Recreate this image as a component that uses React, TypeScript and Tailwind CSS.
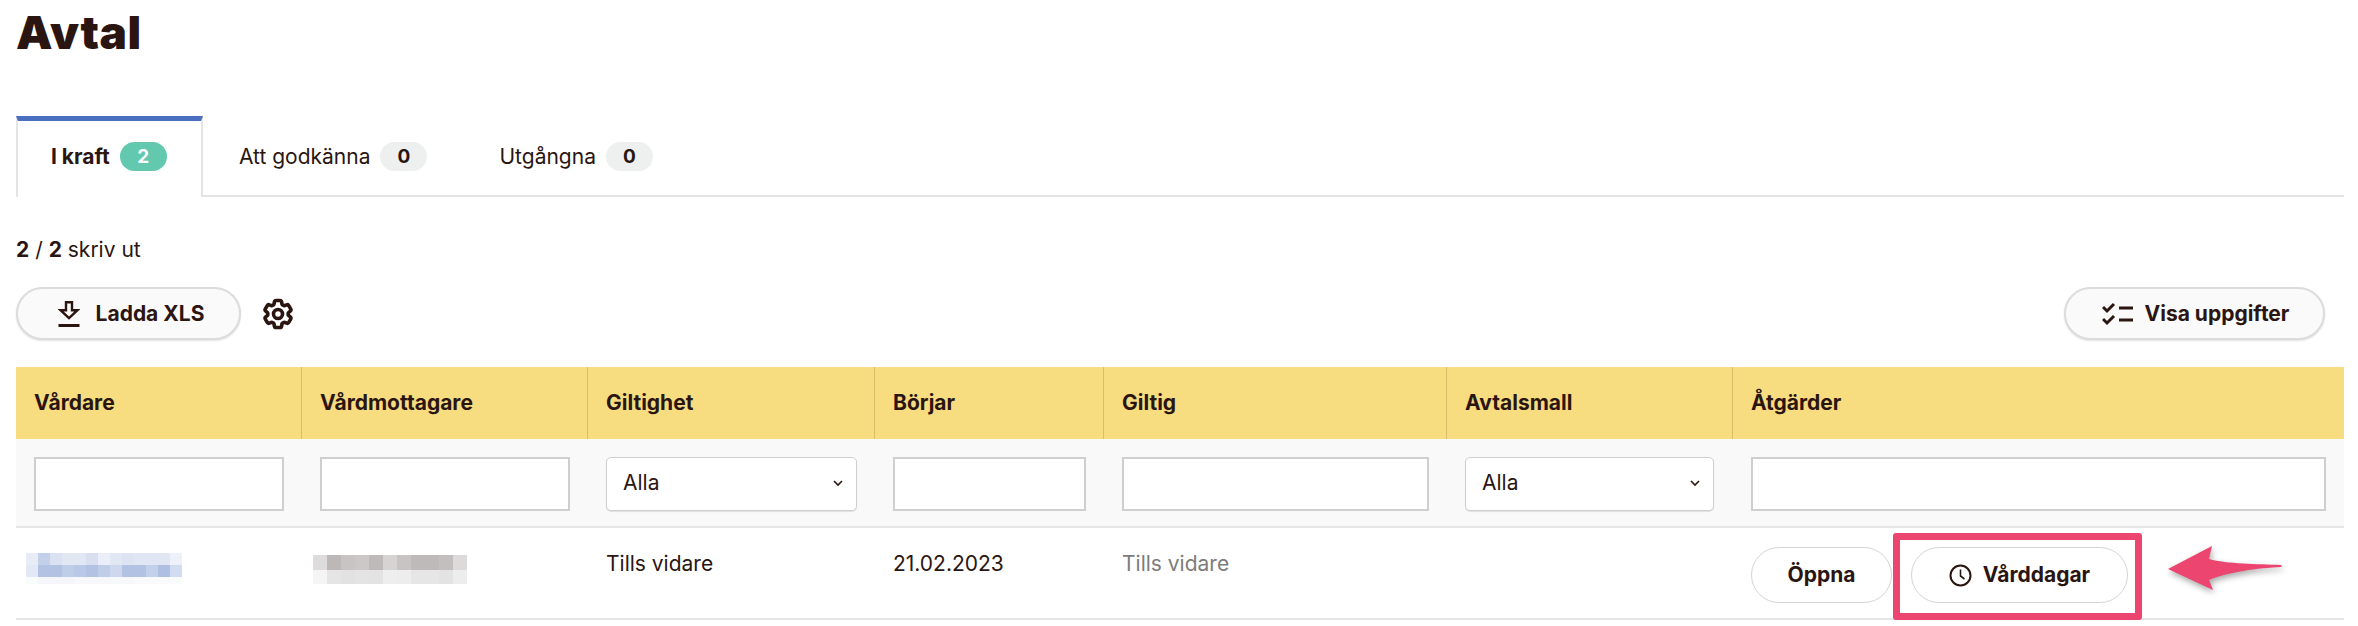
import React from 'react'
import { HiOutlineCog6Tooth } from 'react-icons/hi2'

const cols = 'grid grid-cols-[285px_286px_287px_229px_343px_286px_612px]'

const blueRows = [
  ['#e8ecf7', '#c3d0ea', '#d9e1f2', '#e2e7f4', '#e2e7f4', '#d7dff1', '#ebeef8', '#e2e7f4', '#dce3f2', '#e0e6f4', '#e0e6f4', '#e0e6f4', '#eef1f9'],
  ['#e2e8f5', '#b1c2e3', '#b1c2e3', '#bfcde8', '#b9c8e6', '#b1c2e3', '#bfcde8', '#cdd7ed', '#b1c2e3', '#b1c2e3', '#c3d0ea', '#aebfe1', '#d2dcf0'],
  ['#fafbfd', '#f5f6fb', '#f5f6fb', '#f5f6fb', '#f7f8fc', '#f7f8fc', '#f7f8fc', '#f7f8fc', '#f7f8fc', '#f9fafc', '#f9fafc', '#f9fafc', '#fafbfd'],
]

const greyRows = [
  ['#dddbdb', '#bdb8b8', '#c8c4c4', '#ccc8c8', '#bfbaba', '#d6d3d3', '#c8c4c4', '#bfbaba', '#bfbaba', '#c3bfbf', '#dcdada'],
  ['#f5f5f5', '#e6e5e5', '#e3e2e2', '#e5e4e4', '#e4e3e3', '#efeeee', '#eeeded', '#e7e6e6', '#e7e6e6', '#e4e3e3', '#eeeded'],
]

const Mosaic: React.FC<{ rows: string[][]; cell: string; heights: string[] }> = ({ rows, cell, heights }) => (
  <div className="flex flex-col blur-[0.5px]">
    {rows.map((row, i) => (
      <div key={i} className={`flex ${heights[i]}`}>
        {row.map((c, j) => (
          <div key={j} className={cell} style={{ backgroundColor: c }} />
        ))}
      </div>
    ))}
  </div>
)

const Pill: React.FC<{ children: React.ReactNode; className: string }> = ({ children, className }) => (
  <button className={`flex items-center justify-center rounded-full text-[21px] font-bold ${className}`}>
    {children}
  </button>
)

const Count: React.FC<{ n: number; active?: boolean }> = ({ n, active }) => (
  <span className={`ml-[10px] flex h-[29px] w-[47px] items-center justify-center rounded-full text-[19px] font-bold ${active ? 'bg-[#62c8ae] text-white' : 'bg-[#eef0f0]'}`}>
    {n}
  </span>
)

const TextFilter: React.FC<{ className?: string }> = ({ className }) => (
  <input type="text" className={`h-[54px] border-2 border-[#cfcfcf] bg-white ${className ?? ''}`} />
)

const SelectFilter: React.FC<{ className?: string }> = ({ className }) => (
  <div className={`flex h-[54px] items-center justify-between rounded-[5px] border border-[#cfcfcf] bg-white pb-[2px] pl-4 pr-[13px] shadow-[0_1px_1px_rgba(0,0,0,0.1)] ${className ?? ''}`}>
    <span className="text-[21px]">Alla</span>
    <svg width="10" height="7" viewBox="0 0 10 7" fill="none" stroke="#2a1510" strokeWidth="1.6">
      <path d="M1 1l4 4 4-4" />
    </svg>
  </div>
)

const headers = ['Vårdare', 'Vårdmottagare', 'Giltighet', 'Börjar', 'Giltig', 'Avtalsmall', 'Åtgärder']

export default function App() {
  return (
    <div className="h-[626px] w-[2358px] overflow-hidden bg-white pl-4 pr-[14px] font-['Inter',sans-serif] text-[#2a1510]">
      <h1 className="h-[116px] pt-[6px] text-[46px] leading-[52px] font-black tracking-[0.5px]">Avtal</h1>

      <div className="flex h-[81px] border-b-2 border-[#e4e4e4]">
        <div className="mb-[-2px] flex w-[187px] items-start border-x-2 border-t-[5px] border-x-[#e4e4e4] border-t-[#4a6fc0] bg-white pt-5 pl-[33px]">
          <span className="flex items-center text-[21px] font-bold">I kraft<Count n={2} active /></span>
        </div>
        <div className="flex h-[79px] items-start pt-[25px] pl-[36px]">
          <span className="flex items-center text-[21px]">Att godkänna<Count n={0} /></span>
        </div>
        <div className="flex h-[79px] items-start pt-[25px] pl-[72px]">
          <span className="flex items-center text-[21px]">Utgångna<Count n={0} /></span>
        </div>
      </div>

      <p className="mt-[40px] h-[26px] text-[21px] leading-[26px]"><b>2</b> / <b>2</b> skriv ut</p>

      <div className="mt-[24px] mr-[19px] flex items-center justify-between">
        <div className="flex items-center">
          <Pill className="h-[53px] w-[225px] border-2 border-[#dcdcdc] bg-[#fafafa] pl-[5px] shadow-[0_1px_2px_rgba(0,0,0,0.12)]">
            <svg className="mr-[16px]" width="22" height="26" viewBox="0 0 22 26" fill="none" stroke="#2a1510">
              <path d="M8 1.2h6v8h5.5l-8.5 8-8.5-8H8z" strokeWidth="2.4" />
              <path d="M0.5 24.5h21" strokeWidth="3" />
            </svg>
            Ladda XLS
          </Pill>
          <HiOutlineCog6Tooth className="ml-[19px]" size={36} strokeWidth={2.4} />
        </div>
        <Pill className="h-[53px] w-[261px] border-2 border-[#dcdcdc] bg-[#fafafa] pl-[2px] shadow-[0_1px_2px_rgba(0,0,0,0.12)]">
          <svg className="mr-[12px]" width="31" height="24" viewBox="0 0 31 24" fill="none" stroke="#2a1510" strokeWidth="3">
            <path d="M1 5l4 4 7-7M1 17l4 4 7-7" />
            <path d="M17 6h14M17 18h14" />
          </svg>
          Visa uppgifter
        </Pill>
      </div>

      <div className={`${cols} mt-[27px] h-[72px] bg-[#f7dc80] text-[21px] font-bold`}>
        {headers.map((h, i) => (
          <div key={h} className={`flex items-center pl-[18px] ${i > 0 ? 'border-l border-[#d9bd68]' : ''}`}>{h}</div>
        ))}
      </div>

      <div className={`${cols} h-[89px] items-start border-b-2 border-[#e6e6e6] bg-[#f9f9f9] pt-[18px]`}>
        <TextFilter className="ml-[18px] w-[250px]" />
        <TextFilter className="ml-[19px] w-[250px]" />
        <SelectFilter className="ml-[19px] w-[251px]" />
        <TextFilter className="ml-[19px] w-[193px]" />
        <TextFilter className="ml-[19px] w-[307px]" />
        <SelectFilter className="ml-[19px] w-[249px]" />
        <TextFilter className="ml-[19px] w-[575px]" />
      </div>

      <div className={`${cols} h-[92px] items-center border-b-2 border-[#e6e6e6] text-[21px]`}>
        <div className="mb-[9px] pl-[10px]">
          <Mosaic rows={blueRows} cell="w-3 h-full" heights={['h-3', 'h-3', 'h-[7px]']} />
        </div>
        <div className="mb-[7px] pl-[12px]">
          <Mosaic rows={greyRows} cell="w-[14px] h-full" heights={['h-[15px]', 'h-[14px]']} />
        </div>
        <div className="mb-[18px] pl-[19px]">Tills vidare</div>
        <div className="mb-[18px] pl-[19px]">21.02.2023</div>
        <div className="mb-[18px] pl-[19px] text-[#7c7c7c]">Tills vidare</div>
        <div />
        <div className="relative mt-[4px] flex pl-[19px]">
          <Pill className="h-14 w-[141px] border border-[#d4d4d4] bg-white">Öppna</Pill>
          <Pill className="ml-[19px] h-14 w-[217px] border border-[#d4d4d4] bg-white">
            <svg className="mr-[11px]" width="23" height="23" viewBox="0 0 23 23" fill="none" stroke="#2a1510" strokeWidth="2">
              <circle cx="11.5" cy="11.5" r="10" />
              <path d="M11.5 5.5v6.5l4 3" strokeWidth="1.6" />
            </svg>
            Vårddagar
          </Pill>
          {/* red box + arrow sit on top of the row */}
          <div className="absolute top-[-14px] left-[161px] h-[87px] w-[249px] rounded-[3px] border-[7px] border-[#ec4570]" />
          <svg className="absolute top-[-2px] left-[435px] drop-shadow-[1px_3px_3px_rgba(0,0,0,0.35)]" width="116" height="48" viewBox="0 0 116 48" fill="#ec4570">
            <path d="M1 24L45 1 42 14C60 19 90 19 114 20 115 21 115 21 114 22 92 23 60 27 42 35L46 45z" />
          </svg>
        </div>
      </div>
    </div>
  )
}
